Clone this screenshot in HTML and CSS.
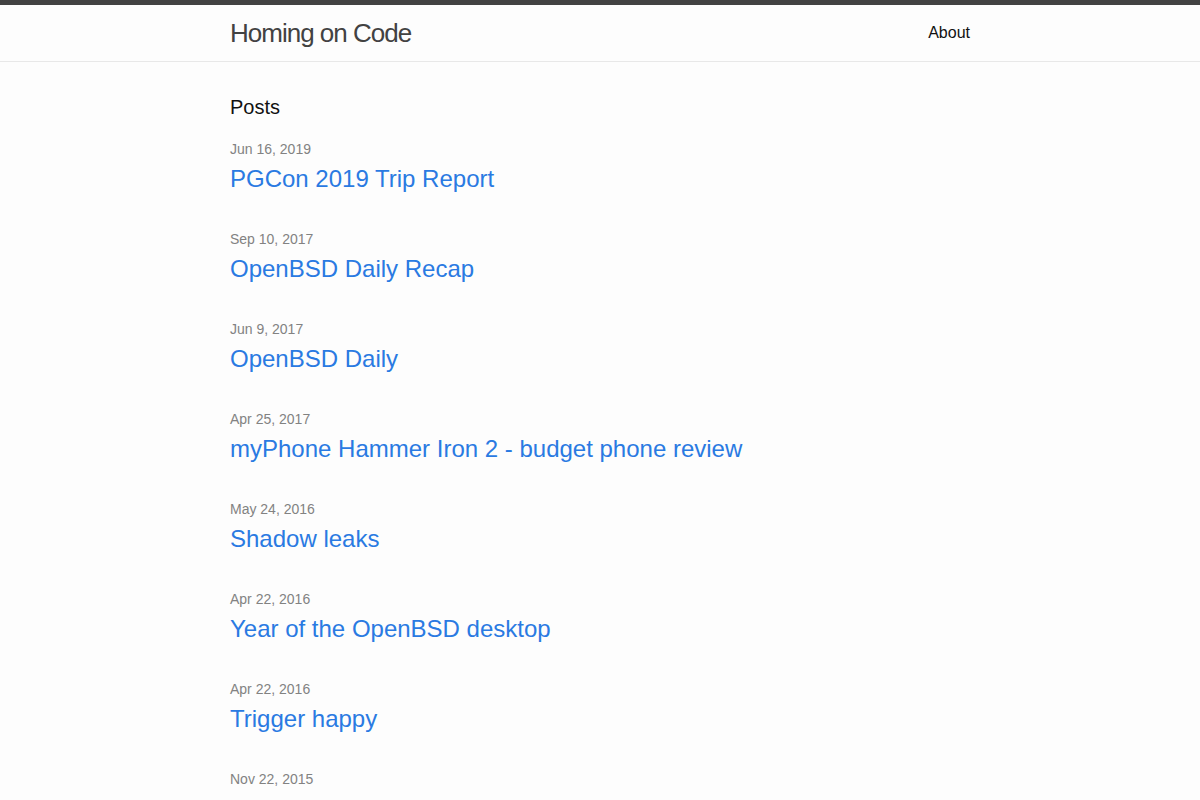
FILE: index.html
```html
<!DOCTYPE html>
<html lang="en">
<head>
    <meta charset="UTF-8">
    <meta name="viewport" content="width=device-width, initial-scale=1.0">
    <title>Homing on Code</title>
    <link rel="stylesheet" href="styles.css">
</head>
<body>
    <header class="site-header">
        <div class="wrapper header-inner">
            <a class="site-title" href="#">Homing on Code</a>
            <nav class="site-nav">
                <a class="page-link" href="#">About</a>
            </nav>
        </div>
    </header>

    <main class="page-content">
        <div class="wrapper">
            <h2 class="post-list-heading">Posts</h2>
            <ul class="post-list">
                <li>
                    <span class="post-meta">Jun 16, 2019</span>
                    <h3><a class="post-link" href="#">PGCon 2019 Trip Report</a></h3>
                </li>
                <li>
                    <span class="post-meta">Sep 10, 2017</span>
                    <h3><a class="post-link" href="#">OpenBSD Daily Recap</a></h3>
                </li>
                <li>
                    <span class="post-meta">Jun 9, 2017</span>
                    <h3><a class="post-link" href="#">OpenBSD Daily</a></h3>
                </li>
                <li>
                    <span class="post-meta">Apr 25, 2017</span>
                    <h3><a class="post-link" href="#">myPhone Hammer Iron 2 - budget phone review</a></h3>
                </li>
                <li>
                    <span class="post-meta">May 24, 2016</span>
                    <h3><a class="post-link" href="#">Shadow leaks</a></h3>
                </li>
                <li>
                    <span class="post-meta">Apr 22, 2016</span>
                    <h3><a class="post-link" href="#">Year of the OpenBSD desktop</a></h3>
                </li>
                <li>
                    <span class="post-meta">Apr 22, 2016</span>
                    <h3><a class="post-link" href="#">Trigger happy</a></h3>
                </li>
                <li>
                    <span class="post-meta">Nov 22, 2015</span>
                </li>
            </ul>
        </div>
    </main>
</body>
</html>
```

FILE: styles.css
```css
* {
    margin: 0;
    padding: 0;
    box-sizing: border-box;
}

body {
    font-family: "Liberation Sans", Helvetica, Arial, sans-serif;
    font-size: 16px;
    line-height: 1.5;
    color: #111;
    background: #fdfdfd;
}

a {
    text-decoration: none;
}

.wrapper {
    max-width: 800px;
    margin: 0 auto;
    padding: 0 30px;
}

.site-header {
    border-top: 5px solid #424242;
    border-bottom: 1px solid #e8e8e8;
}

.header-inner {
    display: flex;
    justify-content: space-between;
    align-items: center;
    height: 56px;
}

.site-title {
    font-size: 26px;
    font-weight: 300;
    letter-spacing: -1px;
    line-height: 56px;
    color: #424242;
}

.page-link {
    color: #111;
    line-height: 56px;
}

.page-content {
    padding: 30px 0 0;
}

.post-list-heading {
    font-size: 20px;
    font-weight: 400;
    line-height: 30px;
    margin-bottom: 17px;
}

.post-list {
    list-style: none;
    display: flex;
    flex-direction: column;
    gap: 32px;
}

.post-meta {
    display: block;
    font-size: 14px;
    line-height: 21px;
    color: #828282;
}

.post-list h3 {
    font-weight: 400;
    margin-top: 1px;
}

.post-link {
    display: block;
    font-size: 24px;
    line-height: 36px;
    color: #2a7ae2;
}
```
